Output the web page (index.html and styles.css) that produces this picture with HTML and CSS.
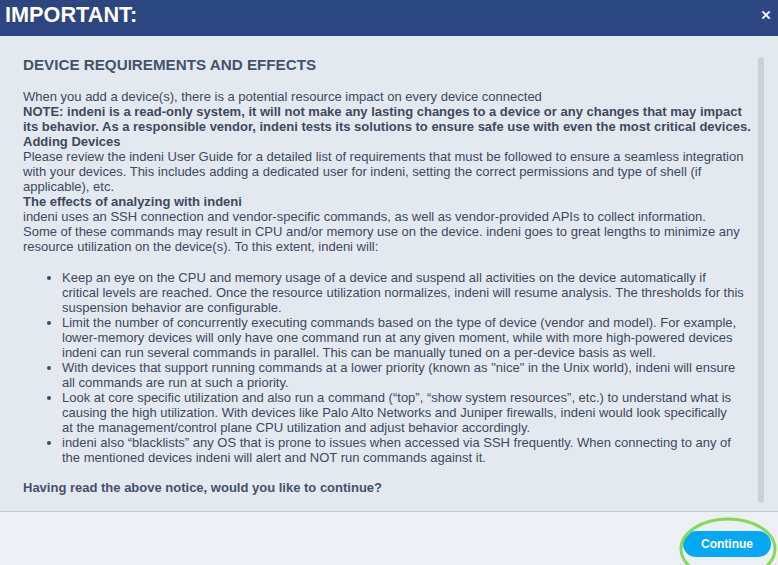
FILE: index.html
```html
<!DOCTYPE html>
<html>
<head>
    <meta charset="utf-8">
    <title>Important notice</title>
    <link rel="stylesheet" href="styles.css">
</head>
<body>
    <div class="dialog">
        <div class="dialog-header">
            <span class="dialog-title">IMPORTANT:</span>
            <svg class="dialog-close" width="8" height="8" viewBox="0 0 8 8">
                <path d="M1 1 L7 7 M7 1 L1 7" stroke="#fff" stroke-width="1.8" stroke-linecap="square"/>
            </svg>
        </div>

        <div class="dialog-body">
            <div class="notice">
                <h2>DEVICE REQUIREMENTS AND EFFECTS</h2>
                <p>
                    When you add a device(s), there is a potential resource impact on every device connected<br>
                    <b>NOTE: indeni is a read-only system, it will not make any lasting changes to a device or any changes that may impact<br>
                    its behavior. As a responsible vendor, indeni tests its solutions to ensure safe use with even the most critical devices.</b><br>
                    <b>Adding Devices</b><br>
                    Please review the indeni User Guide for a detailed list of requirements that must be followed to ensure a seamless integration<br>
                    with your devices. This includes adding a dedicated user for indeni, setting the correct permissions and type of shell (if<br>
                    applicable), etc.<br>
                    <b>The effects of analyzing with indeni</b><br>
                    indeni uses an SSH connection and vendor-specific commands, as well as vendor-provided APIs to collect information.<br>
                    Some of these commands may result in CPU and/or memory use on the device. indeni goes to great lengths to minimize any<br>
                    resource utilization on the device(s). To this extent, indeni will:
                </p>
                <ul>
                    <li>Keep an eye on the CPU and memory usage of a device and suspend all activities on the device automatically if<br>
                        critical levels are reached. Once the resource utilization normalizes, indeni will resume analysis. The thresholds for this<br>
                        suspension behavior are configurable.</li>
                    <li>Limit the number of concurrently executing commands based on the type of device (vendor and model). For example,<br>
                        lower-memory devices will only have one command run at any given moment, while with more high-powered devices<br>
                        indeni can run several commands in parallel. This can be manually tuned on a per-device basis as well.</li>
                    <li>With devices that support running commands at a lower priority (known as "nice" in the Unix world), indeni will ensure<br>
                        all commands are run at such a priority.</li>
                    <li>Look at core specific utilization and also run a command (&ldquo;top&rdquo;, &ldquo;show system resources&rdquo;, etc.) to understand what is<br>
                        causing the high utilization. With devices like Palo Alto Networks and Juniper firewalls, indeni would look specifically<br>
                        at the management/control plane CPU utilization and adjust behavior accordingly.</li>
                    <li>indeni also &ldquo;blacklists&rdquo; any OS that is prone to issues when accessed via SSH frequently. When connecting to any of<br>
                        the mentioned devices indeni will alert and NOT run commands against it.</li>
                </ul>
                <p class="question"><b>Having read the above notice, would you like to continue?</b></p>
            </div>
            <div class="scroll-track">
                <div class="scroll-thumb"></div>
            </div>
        </div>

        <div class="dialog-footer">
            <button class="btn-continue">Continue</button>
            <svg class="highlight" width="104" height="70" viewBox="0 0 104 70">
                <ellipse cx="50" cy="37" rx="47" ry="30" fill="none" stroke="#86d85a" stroke-width="3"/>
            </svg>
        </div>
    </div>
</body>
</html>
```

FILE: styles.css
```css
* {
    box-sizing: border-box;
}
body {
    margin: 0;
    font-family: "Liberation Sans", Arial, Helvetica, sans-serif;
    background: #e4e8ef;
}
.dialog {
    width: 778px;
    height: 565px;
    display: flex;
    flex-direction: column;
    overflow: hidden;
}
.dialog-header {
    height: 36px;
    flex: 0 0 36px;
    background: #2b4680;
    color: #fff;
    display: flex;
    align-items: flex-start;
    justify-content: space-between;
    padding: 0 8px 0 5px;
}
.dialog-title {
    font-size: 21.7px;
    font-weight: bold;
    line-height: 30px;
}
.dialog-close {
    margin-top: 11px;
}
.dialog-body {
    flex: 0 0 475px;
    display: flex;
    color: #3e4a5d;
}
.notice {
    flex: 1;
    min-width: 0;
    padding: 20px 0 0 23px;
    font-size: 13px;
    line-height: 15px;
    white-space: nowrap;
}
.notice h2 {
    margin: 0 0 15px 0;
    font-size: 15.2px;
    line-height: 18px;
    color: #44526a;
}
.notice p {
    margin: 0;
}
.notice ul {
    margin: 16px 0 15px 0;
    padding-left: 39px;
}
.notice .question {
    color: #44526a;
}
.scroll-track {
    flex: 0 0 20px;
    padding: 21px 0 0 0;
}
.scroll-thumb {
    width: 6px;
    height: 446px;
    border-radius: 3px;
    background: #cdd1d9;
}
.dialog-footer {
    flex: 1;
    position: relative;
    background: #eceff3;
    border-top: 1px solid #c3c8d1;
    display: flex;
    justify-content: flex-end;
    align-items: flex-start;
    padding: 19px 7px 0 0;
}
.btn-continue {
    width: 88px;
    height: 26px;
    border: none;
    border-radius: 13px;
    background: #05a8f4;
    color: #fff;
    font-family: "Liberation Sans", Arial, sans-serif;
    font-size: 12px;
    font-weight: bold;
    padding: 0;
}
.highlight {
    position: absolute;
    left: 678px;
    top: 0px;
}
```
